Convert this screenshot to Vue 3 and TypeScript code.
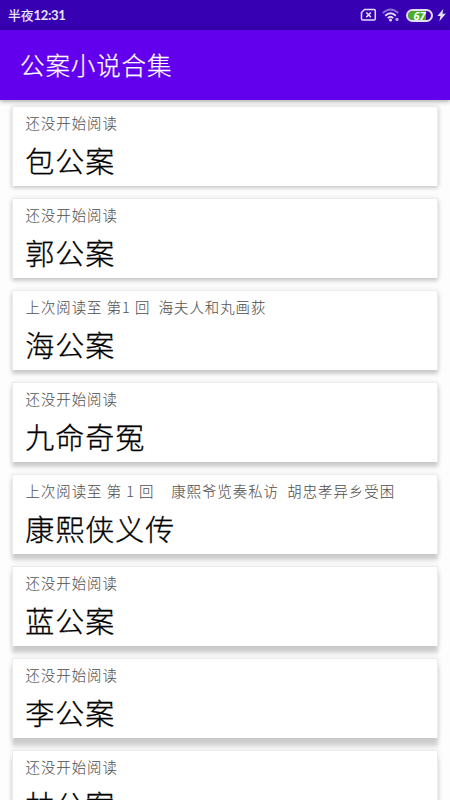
<script setup lang="ts">
interface Book {
  title: string
  progress: string
}

const unread = '还没开始阅读'

const books: Book[] = [
  { title: '包公案', progress: unread },
  { title: '郭公案', progress: unread },
  { title: '海公案', progress: '上次阅读至 第1 回  海夫人和丸画荻' },
  { title: '九命奇冤', progress: unread },
  { title: '康熙侠义传', progress: '上次阅读至 第 1 回    康熙爷览奏私访  胡忠孝异乡受困' },
  { title: '蓝公案', progress: unread },
  { title: '李公案', progress: unread },
  { title: '林公案', progress: unread },
]

const shadowOffset = (index: number): string => `${(1.8 + index).toFixed(1)}px`
</script>

<template>
  <div class="screen">
    <div class="status">
      <span class="clock">半夜<b>12:31</b></span>
      <div class="indicators">
        <svg class="sim" width="17" height="14" viewBox="0 0 17 14">
          <path d="M4.6 1.4H14a1.3 1.3 0 0 1 1.3 1.3v8.1a1.3 1.3 0 0 1-1.3 1.3H2.8a1.3 1.3 0 0 1-1.3-1.3V4.5z" />
          <path d="M6.3 4.5l4.6 4.6M10.9 4.5L6.3 9.1" />
        </svg>
        <svg class="wifi" width="18" height="14" viewBox="0 0 18 14">
          <path class="weak" d="M.8 5Q8.5-2 16.2 5" />
          <path d="M3.2 7.7Q8.5 2.7 13.8 7.7M5.8 10.2Q8.5 7.5 11.2 10.2" />
          <circle cx="8.5" cy="12" r="1.5" />
          <circle cx="15" cy="11.4" r="1.6" class="activity" />
        </svg>
        <div class="battery"><span>67</span></div>
        <svg class="bolt" width="9" height="14" viewBox="0 0 9 14">
          <path d="M6.4.8L.4 8h3L2.4 13.2 8.8 5.8H5.4z" />
        </svg>
      </div>
    </div>
    <header class="toolbar">
      <h1>公案小说合集</h1>
    </header>
    <main class="list">
      <article
        v-for="(book, index) in books"
        :key="book.title"
        class="card"
        :style="{ '--drop': shadowOffset(index) }"
      >
        <p class="progress">{{ book.progress }}</p>
        <h2 class="title">{{ book.title }}</h2>
      </article>
    </main>
  </div>
</template>

<style>
body {
  overflow: hidden;
}
</style>

<style scoped>
.screen {
  display: flex;
  flex-direction: column;
  height: 800px;
  overflow: hidden;
  background: #fdfdfd;
  font-family: 'Noto Sans CJK SC', sans-serif;
}

.status {
  display: flex;
  flex: none;
  align-items: center;
  justify-content: space-between;
  height: 30px;
  padding: 0 4px 0 8px;
  box-sizing: border-box;
  background: #3700b3;
  color: #e9e3f8;
}

.clock {
  font-size: 12.8px;
  font-weight: 500;
  line-height: 30px;
}

.clock b {
  font-family: Lato, sans-serif;
  font-size: 13px;
  font-weight: 700;
  letter-spacing: -0.3px;
}

.indicators {
  display: flex;
  align-items: center;
}

.indicators svg {
  fill: none;
  stroke: #e4def5;
  stroke-width: 1.5;
}

.sim {
  margin-right: 5px;
}

.indicators .wifi {
  margin-right: 6px;
  stroke-width: 1.9;
}

.wifi circle,
.bolt path {
  fill: #e4def5;
  stroke: none;
}

.wifi .activity {
  opacity: 0.75;
}

.wifi .weak {
  opacity: 0.5;
}

.battery {
  width: 27px;
  height: 13px;
  box-sizing: border-box;
  margin-right: 4px;
  border: 2px solid #e4def5;
  border-radius: 7px;
  background: linear-gradient(90deg, #4cae20 0 80%, #3700b3 80%);
  background-clip: padding-box;
  color: #fff;
  font: italic 700 11px/9px 'Open Sans', sans-serif;
  text-align: center;
}

.toolbar {
  position: relative;
  z-index: 1;
  display: flex;
  flex: none;
  align-items: center;
  height: 70px;
  padding-left: 20px;
  box-sizing: border-box;
  background: #6200ee;
  box-shadow: 0 1px 5px rgba(0, 0, 0, 0.4);
}

.toolbar h1 {
  margin: 0;
  color: #fff;
  font-size: 24.5px;
  font-weight: 300;
  -webkit-text-stroke: 0.25px #fff;
  letter-spacing: 0.9px;
  line-height: 36px;
}

.list {
  display: flex;
  flex-direction: column;
  gap: 12px;
  padding: 6px 12px 0;
}

.card {
  flex: none;
  height: 80px;
  padding: 6px 13px 0;
  box-sizing: border-box;
  border: solid #ececec;
  border-width: 1px 1px 0;
  background: #fff;
  box-shadow:
    0 var(--drop) 4px rgba(0, 0, 0, 0.18),
    0 0 6px rgba(0, 0, 0, 0.08);
}

.progress {
  margin: 0 0 0 -0.5px;
  color: #555;
  font-size: 14.4px;
  font-weight: 300;
  -webkit-text-stroke: 0.1px #555;
  letter-spacing: 1px;
  line-height: 20px;
  white-space: pre;
}

.title {
  margin: 6px 0 0 -0.7px;
  color: #000;
  font-size: 29px;
  font-weight: 300;
  -webkit-text-stroke: 0.3px #000;
  letter-spacing: 1px;
  line-height: 42px;
}
</style>
